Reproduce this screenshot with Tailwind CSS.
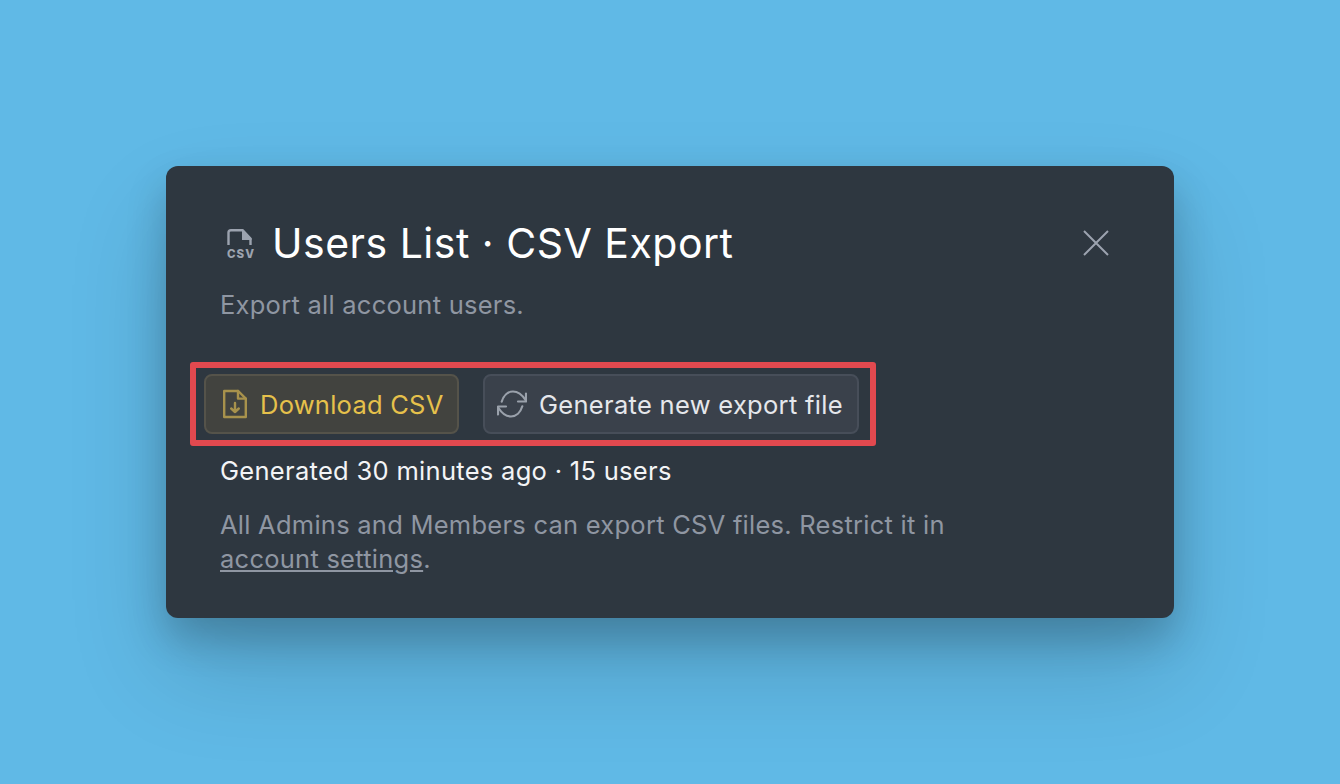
<!DOCTYPE html>
<html lang="en">
<head>
  <meta charset="UTF-8" />
  <title>Users List CSV Export</title>
  <script src="https://cdn.jsdelivr.net/npm/@tailwindcss/browser@4"></script>
</head>
<body class="bg-[#60b9e6] h-[784px] overflow-hidden font-['Inter',sans-serif] antialiased">
  <div class="flex h-full items-start justify-center pt-[166px]">
    <div class="w-[1008px] h-[452px] rounded-[12px] bg-[#2e3740] pl-[54px] pr-[64px] pt-[51px] shadow-[0_20px_40px_rgba(0,0,0,0.2),0_50px_100px_rgba(0,0,0,0.16)]">

      <div class="flex items-center justify-between h-[52px]">
        <div class="flex items-center">
          <svg class="ml-[5px] w-[30px] h-[36px] overflow-visible" viewBox="0 0 30 36" fill="none">
            <path d="M3.5 20V7.5C3.5 6 4.5 5.2 6 5.2H17.5L25.5 13.5V20" stroke="#9ca3af" stroke-width="2.4" stroke-linejoin="round"/>
            <path d="M17 4.5h1L26.5 13.5V15H17z" fill="#9ca3af"/>
            <text x="2" y="33" font-family="Inter, sans-serif" font-size="11.5" font-weight="800" letter-spacing="1" fill="#9ca3af">CSV</text>
          </svg>
          <h1 class="ml-[17px] text-[41px] leading-[52px] tracking-[0.5px] font-normal text-white">Users List · CSV Export</h1>
        </div>
        <svg class="w-[28px] h-[28px]" viewBox="0 0 28 28" fill="none" stroke="#9ca3af" stroke-width="2">
          <path d="M2 2l24 24M26 2L2 26"/>
        </svg>
      </div>

      <p class="mt-[19px] text-[25.5px] leading-[34px] tracking-[0.25px] text-[#8f96a2]">Export all account users.</p>

      <div class="mt-[40px] -ml-[30px] flex w-[686px] h-[84px] items-center gap-[24px] rounded-[3px] border-[6px] border-[#e2494f] pl-[8px]">
        <button class="flex h-[60px] w-[255px] items-center rounded-[8px] border-2 border-[#55534a] bg-[#42433f] pl-[16px] text-[25.5px] leading-[34px] tracking-[0.25px] text-[#e6c14b]">
          <svg class="w-[26px] h-[32px] shrink-0" viewBox="0 0 26 32" fill="none" stroke="#a8924c" stroke-width="2.4" stroke-linejoin="round" stroke-linecap="round">
            <path d="M2.2 3h14l7.6 7.6V29H2.2z"/>
            <path d="M16 3v7.6h7.8"/>
            <path d="M13 15v9M9.2 20.5L13 24l3.8-3.5"/>
          </svg>
          <span class="ml-[12px] pt-[2px]">Download CSV</span>
        </button>
        <button class="flex h-[60px] w-[376px] items-center rounded-[8px] border-2 border-[#474e59] bg-[#3a414b] pl-[12px] text-[25.5px] leading-[34px] tracking-[0.3px] text-[#e5e7eb]">
          <svg class="w-[30px] h-[28px] shrink-0" viewBox="0 0 30 28" fill="none" stroke="#9aa1ab" stroke-width="2.2" stroke-linejoin="round" stroke-linecap="round">
            <path d="M4.7 11.7C6.5 5.5 11 1.5 16 1.5c5 0 9 3 12.5 8.5"/>
            <path d="M29 3.5v8h-8"/>
            <path d="M25.3 16.3C23.5 22.5 19 26.5 14 26.5c-5 0-9-3-12.5-8.5"/>
            <path d="M1 24.5v-8h8"/>
          </svg>
          <span class="ml-[12px] pt-[2px]">Generate new export file</span>
        </button>
      </div>

      <p class="mt-[8px] text-[25.5px] leading-[34px] tracking-[0.3px] text-[#f3f4f6]">Generated 30 minutes ago · 15 users</p>
      <p class="mt-[20px] w-[760px] text-[25.5px] leading-[34px] tracking-[0.25px] text-[#8f96a2]">All Admins and Members can export CSV files. Restrict it in <a href="#" class="underline">account settings</a>.</p>
    </div>
  </div>
</body>
</html>
